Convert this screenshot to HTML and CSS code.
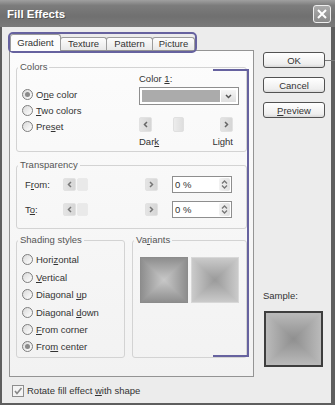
FILE: index.html
```html
<!DOCTYPE html>
<html lang="en">
<head>
    <meta charset="UTF-8">
    <title>Fill Effects</title>
    <link rel="stylesheet" href="styles.css">
</head>
<body>
<div class="window">
    <div class="titlebar">
        <span class="title">Fill Effects</span>
        <span class="close">
            <svg width="10" height="10" viewBox="0 0 10 10"><path d="M1 1 L9 9 M9 1 L1 9" stroke="#fff" stroke-width="2"/></svg>
        </span>
    </div>

    <div class="dialog">
        <div class="main">
            <!-- Tabs -->
            <div class="tabs">
                <span class="tab active tab-gradient">Gradient</span>
                <span class="tab tab-texture">Texture</span>
                <span class="tab tab-pattern">Pattern</span>
                <span class="tab tab-picture">Picture</span>
            </div>

            <div class="panel">
                <!-- Colors -->
                <fieldset class="group">
                    <legend>Colors</legend>
                    <div class="colors-body">
                        <div class="color-radios">
                            <div class="radio-row"><span class="radio on"></span><span>O<u>n</u>e color</span></div>
                            <div class="radio-row"><span class="radio"></span><span><u>T</u>wo colors</span></div>
                            <div class="radio-row"><span class="radio"></span><span>Pre<u>s</u>et</span></div>
                        </div>
                        <div class="color-pick">
                            <div class="pick-label">Color <u>1</u>:</div>
                            <div class="dropdown">
                                <span class="swatch"></span>
                                <span class="drop-btn">
                                    <svg width="7" height="5" viewBox="0 0 7 5"><path d="M1 1 L3.5 3.5 L6 1" fill="none" stroke="#555" stroke-width="1.5"/></svg>
                                </span>
                            </div>
                            <div class="scroll scroll-wide">
                                <span class="scroll-btn">
                                    <svg width="5" height="7" viewBox="0 0 5 7"><path d="M4 1 L1.5 3.5 L4 6" fill="none" stroke="#666" stroke-width="1.5"/></svg>
                                </span>
                                <span class="thumb thumb-mid"></span>
                                <span class="scroll-btn">
                                    <svg width="5" height="7" viewBox="0 0 5 7"><path d="M1 1 L3.5 3.5 L1 6" fill="none" stroke="#666" stroke-width="1.5"/></svg>
                                </span>
                            </div>
                            <div class="dark-light"><span>Dar<u>k</u></span><span>Light</span></div>
                        </div>
                    </div>
                </fieldset>

                <!-- Transparency -->
                <fieldset class="group transparency">
                    <legend>Transparency</legend>
                    <div class="trans-body">
                        <div class="trans-row">
                            <span class="trans-label">F<u>r</u>om:</span>
                            <div class="scroll scroll-small">
                                <span class="scroll-btn">
                                    <svg width="5" height="7" viewBox="0 0 5 7"><path d="M4 1 L1.5 3.5 L4 6" fill="none" stroke="#777" stroke-width="1.5"/></svg>
                                </span>
                                <span class="thumb thumb-start"></span>
                                <span class="scroll-btn">
                                    <svg width="5" height="7" viewBox="0 0 5 7"><path d="M1 1 L3.5 3.5 L1 6" fill="none" stroke="#777" stroke-width="1.5"/></svg>
                                </span>
                            </div>
                            <div class="spin">
                                <span>0 %</span>
                                <span class="spin-arrows">
                                    <svg width="7" height="4" viewBox="0 0 7 4"><path d="M1 3.5 L3.5 1 L6 3.5" fill="none" stroke="#777" stroke-width="1.3"/></svg>
                                    <svg width="7" height="4" viewBox="0 0 7 4"><path d="M1 0.5 L3.5 3 L6 0.5" fill="none" stroke="#777" stroke-width="1.3"/></svg>
                                </span>
                            </div>
                        </div>
                        <div class="trans-row">
                            <span class="trans-label">T<u>o</u>:</span>
                            <div class="scroll scroll-small">
                                <span class="scroll-btn">
                                    <svg width="5" height="7" viewBox="0 0 5 7"><path d="M4 1 L1.5 3.5 L4 6" fill="none" stroke="#777" stroke-width="1.5"/></svg>
                                </span>
                                <span class="thumb thumb-start"></span>
                                <span class="scroll-btn">
                                    <svg width="5" height="7" viewBox="0 0 5 7"><path d="M1 1 L3.5 3.5 L1 6" fill="none" stroke="#777" stroke-width="1.5"/></svg>
                                </span>
                            </div>
                            <div class="spin">
                                <span>0 %</span>
                                <span class="spin-arrows">
                                    <svg width="7" height="4" viewBox="0 0 7 4"><path d="M1 3.5 L3.5 1 L6 3.5" fill="none" stroke="#777" stroke-width="1.3"/></svg>
                                    <svg width="7" height="4" viewBox="0 0 7 4"><path d="M1 0.5 L3.5 3 L6 0.5" fill="none" stroke="#777" stroke-width="1.3"/></svg>
                                </span>
                            </div>
                        </div>
                    </div>
                </fieldset>

                <!-- Shading styles and variants -->
                <div class="bottom-groups">
                    <fieldset class="group shading">
                        <legend>Shading styles</legend>
                        <div class="shading-body">
                            <div class="radio-row"><span class="radio"></span><span>Hori<u>z</u>ontal</span></div>
                            <div class="radio-row"><span class="radio"></span><span><u>V</u>ertical</span></div>
                            <div class="radio-row"><span class="radio"></span><span>Diagonal <u>u</u>p</span></div>
                            <div class="radio-row"><span class="radio"></span><span>Diagonal <u>d</u>own</span></div>
                            <div class="radio-row"><span class="radio"></span><span><u>F</u>rom corner</span></div>
                            <div class="radio-row"><span class="radio on"></span><span>Fro<u>m</u> center</span></div>
                        </div>
                    </fieldset>
                    <fieldset class="group variants">
                        <legend>Va<u>r</u>iants</legend>
                        <div class="variants-body">
                            <span class="variant variant-light"></span>
                            <span class="variant variant-dark"></span>
                        </div>
                    </fieldset>
                </div>
            </div>

            <div class="rotate">
                <span class="checkbox">
                    <svg width="10" height="10" viewBox="0 0 10 10"><path d="M2 5 L4 7.5 L8.5 2" fill="none" stroke="#888" stroke-width="1.6"/></svg>
                </span>
                <span>Rotate fill effect <u>w</u>ith shape</span>
            </div>
        </div>

        <div class="side">
            <div class="btn">OK</div>
            <div class="btn">Cancel</div>
            <div class="btn"><span><u>P</u>review</span></div>
            <div class="sample-label">Sample:</div>
            <div class="sample-box"></div>
        </div>
    </div>

    <!-- annotation marks drawn over the dialog -->
    <div class="mark mark-tabs"></div>
    <div class="mark mark-bracket"></div>
    <div class="mark mark-tick"></div>
</div>
</body>
</html>
```

FILE: styles.css
```css
* {
    box-sizing: border-box;
}

body {
    margin: 0;
    font-family: "Liberation Sans", Arial, sans-serif;
    font-size: 9.5px;
    color: #333;
    background: #fff;
}

u {
    text-decoration-thickness: 1px;
}

.window {
    position: relative;
    width: 335px;
    height: 405px;
    display: flex;
    flex-direction: column;
    background: #ececec;
}

.titlebar {
    height: 27px;
    display: flex;
    align-items: center;
    justify-content: space-between;
    padding: 0 4px 0 7px;
    background: linear-gradient(#a0a0a0, #7c7c7c 20%, #707070 60%, #7a7a7a);
    color: #fff;
}

.title {
    font-weight: bold;
    font-size: 11.5px;
    text-shadow: 1px 1px 0 #555;
}

.close {
    width: 18px;
    height: 18px;
    border: 1px solid #eee;
    border-radius: 3px;
    background: linear-gradient(#ababab, #8a8a8a);
    display: flex;
    align-items: center;
    justify-content: center;
}

.dialog {
    flex: 1;
    display: flex;
    padding-left: 7px;
    border-left: 2px solid #5e5e5e;
    border-right: 4px solid #5e5e5e;
    border-bottom: 2px solid #5e5e5e;
}

.main {
    width: 245px;
    padding-top: 8px;
}

/* Tabs */
.tabs {
    display: flex;
    align-items: flex-end;
    height: 15px;
    padding-left: 1px;
}

.tab {
    height: 13px;
    line-height: 11px;
    text-align: center;
    border: 1px solid #9c9c9c;
    border-bottom: none;
    border-radius: 3px 3px 0 0;
    background: linear-gradient(#fdfdfd, #e8e8e8);
    margin-left: -1px;
}

.tab.active {
    position: relative;
    z-index: 1;
    height: 17px;
    margin-bottom: -1px;
    margin-left: 0;
    line-height: 15px;
    background: #fcfcfc;
}

.tab-gradient { width: 51px; }
.tab-texture { width: 47px; }
.tab-pattern { width: 47px; }
.tab-picture { width: 43px; }

.panel {
    height: 327px;
    border: 1px solid #949494;
    background: linear-gradient(#fcfcfc, #f2f2f2);
    padding: 10px 6px 0;
}

/* Group boxes */
.group {
    margin: 0;
    padding: 0;
    min-width: 0;
    border: 1px solid #d3d3d3;
    border-radius: 3px;
}

.group legend {
    padding: 0 2px;
    margin-left: 1px;
    line-height: 12px;
    color: #555;
}

.radio-row {
    display: flex;
    align-items: center;
    gap: 3px;
    height: 16px;
}

.radio {
    position: relative;
    width: 11px;
    height: 11px;
    border: 1px solid #7e7e7e;
    border-radius: 50%;
    background: linear-gradient(135deg, #d9d9d9, #fff);
}

.radio.on::after {
    content: "";
    position: absolute;
    left: 2px;
    top: 2px;
    width: 5px;
    height: 5px;
    border-radius: 50%;
    background: #8a8a8a;
}

.colors-body {
    height: 78px;
    display: flex;
}

.color-radios {
    width: 122px;
    padding: 13px 0 0 5px;
}

.color-pick {
    width: 100px;
}

.pick-label {
    line-height: 12px;
}

.dropdown {
    margin-top: 2px;
    height: 18px;
    display: flex;
    padding: 2px;
    border: 1px solid #8e8e8e;
    background: #fff;
}

.swatch {
    flex: 1;
    background: #ababab;
}

.drop-btn {
    width: 15px;
    margin-left: 1px;
    display: flex;
    align-items: center;
    justify-content: center;
    background: linear-gradient(#f6f6f6, #dedede);
}

/* Scroll bars */
.scroll {
    display: flex;
    align-items: stretch;
}

.scroll-wide {
    width: 94px;
    height: 15px;
    margin-top: 12px;
}

.scroll-small {
    width: 95px;
    height: 13px;
}

.scroll-btn {
    width: 13px;
    display: flex;
    align-items: center;
    justify-content: center;
    border: 1px solid #e2e2e2;
    border-radius: 2px;
    background: linear-gradient(90deg, #e4e4e4, #d6d6d6);
}

.scroll-btn:last-child {
    margin-left: auto;
}

.thumb {
    width: 11px;
    border: 1px solid #e0e0e0;
    border-radius: 2px;
    background: linear-gradient(90deg, #ececec, #dedede);
}

.thumb-mid {
    margin-left: 21px;
}

.thumb-start {
    margin-left: 1px;
    border-color: #eaeaea;
    background: #e9e9e9;
}

.dark-light {
    width: 94px;
    margin-top: 4px;
    line-height: 12px;
    display: flex;
    justify-content: space-between;
}

/* Transparency */
.transparency {
    margin-top: 7px;
}

.trans-body {
    height: 57px;
    padding: 5px 0 0 8px;
}

.trans-row {
    display: flex;
    align-items: center;
    height: 17px;
}

.trans-row + .trans-row {
    margin-top: 8px;
}

.trans-label {
    width: 38px;
}

.spin {
    margin-left: 14px;
    width: 60px;
    height: 17px;
    display: flex;
    align-items: center;
    padding-left: 2px;
    border: 1px solid #8e8e8e;
    background: #fff;
}

.spin-arrows {
    margin-left: auto;
    margin-right: 1px;
    width: 11px;
    height: 13px;
    display: flex;
    flex-direction: column;
    align-items: center;
    justify-content: space-evenly;
    background: linear-gradient(90deg, #f2f2f2, #e2e2e2);
    border-radius: 2px;
}

.spin-arrows svg {
    display: block;
}

/* Shading styles and variants */
.bottom-groups {
    display: flex;
    gap: 7px;
    margin-top: 5px;
}

.shading {
    width: 109px;
}

.shading-body {
    height: 111px;
    padding: 5.3px 0 0 5px;
}

.shading-body .radio-row {
    height: 17.4px;
}

.variants {
    width: 115px;
}

.variants-body {
    height: 111px;
    padding: 11px 0 0 7px;
    display: flex;
    align-items: flex-start;
    gap: 3px;
}

.variant {
    width: 48px;
    height: 46px;
}

.variant-light {
    border: 1px solid #8c8c8c;
    background: linear-gradient(90deg, #8e8e8e, #c8c8c8 50%, #8e8e8e),
                linear-gradient(#8e8e8e, #c8c8c8 50%, #8e8e8e);
    background-blend-mode: darken;
}

.variant-dark {
    border: 1px solid #d8d8d8;
    background: linear-gradient(90deg, #cacaca, #9a9a9a 50%, #cacaca),
                linear-gradient(#cacaca, #9a9a9a 50%, #cacaca);
    background-blend-mode: lighten;
}

/* Bottom check box */
.rotate {
    display: flex;
    align-items: center;
    gap: 3px;
    height: 13px;
    margin-top: 7px;
    padding-left: 3px;
}

.checkbox {
    width: 12px;
    height: 12px;
    display: flex;
    align-items: center;
    justify-content: center;
    border: 1px solid #8e8e8e;
    background: #f4f4f4;
}

/* Right column */
.side {
    width: 62px;
    margin-left: 9px;
    padding-top: 25px;
    display: flex;
    flex-direction: column;
}

.btn {
    height: 16px;
    display: flex;
    align-items: center;
    justify-content: center;
    border: 1px solid #525252;
    border-radius: 3px;
    background: linear-gradient(#fff, #eeeeee 80%, #d9d9d9);
}

.btn + .btn {
    margin-top: 9px;
}

.sample-label {
    margin-top: 172px;
    line-height: 12px;
}

.sample-box {
    margin-top: 9px;
    margin-left: 1px;
    width: 59px;
    height: 56px;
    border: 2px solid #3e3e3e;
    background: linear-gradient(90deg, #bababa, #8f8f8f 50%, #bababa),
                linear-gradient(#bababa, #8f8f8f 50%, #bababa);
    background-blend-mode: lighten;
}

/* Annotation marks */
.mark {
    position: absolute;
}

.mark-tabs {
    left: 8px;
    top: 32px;
    width: 189px;
    height: 21px;
    border: 2px solid #66629f;
    border-radius: 5px;
}

.mark-bracket {
    left: 213px;
    top: 69px;
    width: 36px;
    height: 288px;
    border: 2px solid #66629f;
    border-left: none;
}

.mark-tick {
    left: 325px;
    top: 60px;
    width: 10px;
    height: 1px;
    background: #7a7a7a;
}
```
